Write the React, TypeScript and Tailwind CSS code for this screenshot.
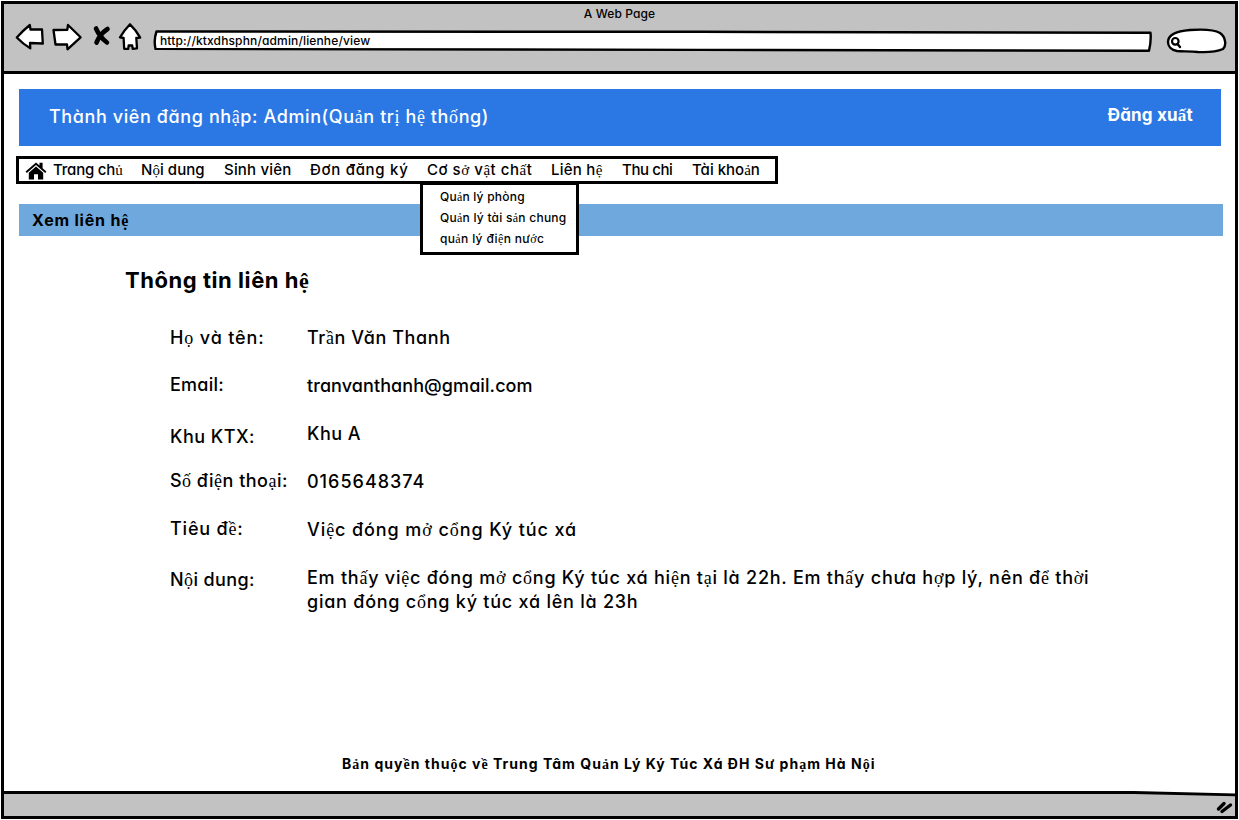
import React from "react";

const EXTENDED = /([\u1E00-\u1EFF]+)/;

function T({ children, className = "" }: { children: string; className?: string }) {
  return (
    <span className={`whitespace-pre ${className}`}>
      {children.split(EXTENDED).map((part, i) =>
        i % 2 ? (
          <span key={i} className="font-['Liberation_Serif',serif] leading-[0]">{part}</span>
        ) : (
          part
        ),
      )}
    </span>
  );
}

const menu = [
  { text: "Trang chủ", cls: "w-[88px] tracking-[-0.2px]" },
  { text: "Nội dung", cls: "w-[83px] tracking-[0.05px]" },
  { text: "Sinh viên", cls: "w-[86px] tracking-[0.2px]" },
  { text: "Đơn đăng ký", cls: "w-[117px] tracking-[0.7px]" },
  { text: "Cơ sở vật chất", cls: "w-[124px] tracking-[0.53px]" },
  { text: "Liên hệ", cls: "w-[71px] tracking-[0.25px]" },
  { text: "Thu chi", cls: "w-[70px] tracking-[-0.4px]" },
  { text: "Tài khoản", cls: "w-[76px]" },
];

const labels = [
  { text: "Họ và tên:", cls: "tracking-[0.85px]" },
  { text: "Email:", cls: "mt-[23px] tracking-[0.25px]" },
  { text: "Khu KTX:", cls: "mt-[28px] tracking-[0.5px]" },
  { text: "Số điện thoại:", cls: "mt-[20px] tracking-[0.48px]" },
  { text: "Tiêu đề:", cls: "mt-[24px] tracking-[0.8px]" },
  { text: "Nội dung:", cls: "mt-[27px] tracking-[0.4px]" },
];

const values = [
  { text: "Trần Văn Thanh", cls: "tracking-[0.6px]" },
  { text: "tranvanthanh@gmail.com", cls: "mt-6 tracking-[0.08px]" },
  { text: "Khu A", cls: "mt-6 tracking-[0.5px]" },
  { text: "0165648374", cls: "mt-6 tracking-[1px]" },
  { text: "Việc đóng mở cổng Ký túc xá", cls: "mt-6 tracking-[0.91px]" },
  {
    text: "Em thấy việc đóng mở cổng Ký túc xá hiện tại là 22h. Em thấy chưa hợp lý, nên để thời",
    cls: "mt-6 tracking-[0.76px]",
  },
  { text: "gian đóng cổng ký túc xá lên là 23h", cls: "tracking-[0.76px]" },
];

function BrowserIcons() {
  return (
    <svg className="h-[32px] w-[130px] shrink-0" viewBox="14 22 130 32" fill="white" stroke="black" strokeWidth="2.3" strokeLinejoin="round" strokeLinecap="round">
      <path d="M16.8 37.5 Q23 30.5 29.8 25 L30.5 29.5 L42 29.5 L42.8 43.5 L30 43 L30.3 48.3 Q23 44 16.8 37.5Z" />
      <path d="M53.5 30 L67.3 29.8 L68 25 L80.6 37.3 L67.5 49.3 L67 44.3 L55.5 44.5 Q54.6 38 53.5 30Z" />
      <path d="M96 28.5 Q100 37.5 107 42.5 M107.5 29 Q100 34 96.5 42.5" strokeWidth="4.6" fill="none" />
      <path d="M130 24.3 Q124.5 30 120 37.3 L123.6 38 L124.2 48.8 L128.3 48.8 L128.6 45.5 L132.2 45.5 L132.7 48.8 L137 48.4 L136.3 38 L140.2 37.6 Q136 30 130 24.3Z" />
    </svg>
  );
}

function SearchPill() {
  return (
    <svg className="h-[26px] w-[62px] shrink-0" viewBox="1165 28 62 26" fill="white" stroke="black" strokeWidth="2.4" strokeLinecap="round" strokeLinejoin="round">
      <path d="M1168 42 C1168 34 1178 31 1190 30 C1204 29 1215 30 1220 33 C1226 37 1226.5 46 1223 49 C1216 52 1206 52.4 1198 52 C1190 51.2 1183 51.5 1177 51 C1171 50 1168 46 1168 42Z" />
      <circle cx="1175.3" cy="41.3" r="3.3" strokeWidth="2.2" />
      <path d="M1177.5 44 L1180 47" strokeWidth="2.4" />
    </svg>
  );
}

function HomeIcon() {
  return (
    <svg className="h-[18px] w-[22px] shrink-0" viewBox="0 0 22 18" fill="black">
      <path d="M0.6 9.6 L11 0.6 L14.5 3.6 V0.8 H17.6 V6.2 L21.4 9.6 L20.2 10.9 L11 3 L1.8 10.9Z" />
      <path d="M3.8 10.8 L11 4.6 L18.2 10.8 V17.5 H13 V12.3 H9 V17.5 H3.8Z" />
    </svg>
  );
}

export default function App() {
  return (
    <div className="h-[820px] w-[1239px] overflow-hidden bg-white px-[1px] pt-[1px] font-[Inter,'Liberation_Sans',sans-serif] font-[450] text-black [font-feature-settings:'cv11']">
      <div className="flex h-[818px] w-[1237px] flex-col border-[3px] border-black">
        <header className="flex h-[70px] flex-col border-b-[3px] border-black bg-[#c2c2c2]">
          <div className="flex h-[18px] justify-center text-[12px] leading-[20px] tracking-[0.1px]">
            <T>A Web Page</T>
          </div>
          <div className="flex items-center pl-[10px]">
            <BrowserIcons />
            <div className="relative ml-[9px] mt-[5px] flex h-[22px] w-[999px] shrink-0 items-center pl-[7px] text-[12px] leading-[18px] tracking-[0.14px]">
              <svg className="absolute inset-0 h-[22px] w-[999px]" viewBox="153 30 999 22" fill="white" stroke="black" strokeWidth="2.4" strokeLinejoin="round">
                <path d="M156.5 31.5 L700 31.8 L1150.5 32.8 Q1151.3 41 1149 50.8 L700 49.9 L155.5 48.9 Q153.5 40 156.5 31.5Z" />
              </svg>
              <T className="relative">http://ktxdhsphn/admin/lienhe/view</T>
            </div>
            <div className="ml-[13px] mt-[5px]">
              <SearchPill />
            </div>
          </div>
        </header>

        <main className="flex min-h-0 flex-1 flex-col">
          <div className="ml-[15px] mt-[15px] flex h-[57px] w-[1202px] shrink-0 justify-between bg-[#2b78e4] pl-[30px] pr-[28px] text-white">
            <T className="pt-[16px] text-[18px] leading-[24px] tracking-[0.6px]">Thành viên đăng nhập: Admin(Quản trị hệ thống)</T>
            <T className="pt-[14px] text-[17px] font-bold leading-[24px] tracking-[0.2px]">Đăng xuất</T>
          </div>

          <nav className="relative ml-[12px] mt-[10px] flex h-[28px] w-[762px] shrink-0 items-center border-[3px] border-black bg-white text-[15px] leading-[20px]">
            <span className="ml-[6px] mr-[6px] mt-[2px]"><HomeIcon /></span>
            {menu.map((m) => (
              <T key={m.text} className={`shrink-0 ${m.cls}`}>{m.text}</T>
            ))}
            <div className="absolute left-[401px] top-[23px] z-10 flex h-[73px] w-[159px] flex-col border-[3px] border-black bg-white pl-[17px] pt-[1px] text-[12px] leading-[21px]">
              <T className="tracking-[0.22px]">Quản lý phòng</T>
              <T className="tracking-[0.25px]">Quản lý tài sản chung</T>
              <T className="tracking-[0.35px]">quản lý điện nước</T>
            </div>
          </nav>

          <div className="ml-[15px] mt-[20px] flex h-[32px] w-[1204px] shrink-0 items-center bg-[#6fa8dc] pl-[13px] text-[16px] font-bold leading-[24px] tracking-[0.8px]">
            <T>Xem liên hệ</T>
          </div>

          <h1 className="ml-[121px] mt-[28px] text-[22px] font-bold leading-[32px] tracking-[0.55px]">
            <T>Thông tin liên hệ</T>
          </h1>

          <section className="ml-[166px] mt-[30px] flex text-[18px] leading-[24px]">
            <div className="flex w-[137px] shrink-0 flex-col">
              {labels.map((l) => (
                <T key={l.text} className={l.cls}>{l.text}</T>
              ))}
            </div>
            <div className="flex flex-col">
              {values.map((v) => (
                <T key={v.text} className={v.cls}>{v.text}</T>
              ))}
            </div>
          </section>

          <p className="mb-[17px] ml-[338px] mt-auto text-[14px] font-bold leading-[20px] tracking-[1.02px]">
            <T>Bản quyền thuộc về Trung Tâm Quản Lý Ký Túc Xá ĐH Sư phạm Hà Nội</T>
          </p>
        </main>

        <footer className="relative flex h-[25px] shrink-0 items-center justify-end bg-[#c2c2c2] pr-[1px]">
          <svg className="absolute left-0 top-0 h-[6px] w-[1231px]" viewBox="0 0 1231 6" fill="none">
            <path d="M0 0 H1231 V3.5 L1130 1.5 H0Z" fill="white" />
            <path d="M0 1.5 H1130 L1231 3.8" stroke="black" strokeWidth="2.8" />
          </svg>
          <svg className="mt-[6px] h-[14px] w-[18px]" viewBox="0 0 18 14" stroke="black" strokeWidth="3.4" strokeLinecap="round">
            <path d="M2.5 9 L8 3.5 M6 11.5 L14.5 5" />
          </svg>
        </footer>
      </div>
    </div>
  );
}
